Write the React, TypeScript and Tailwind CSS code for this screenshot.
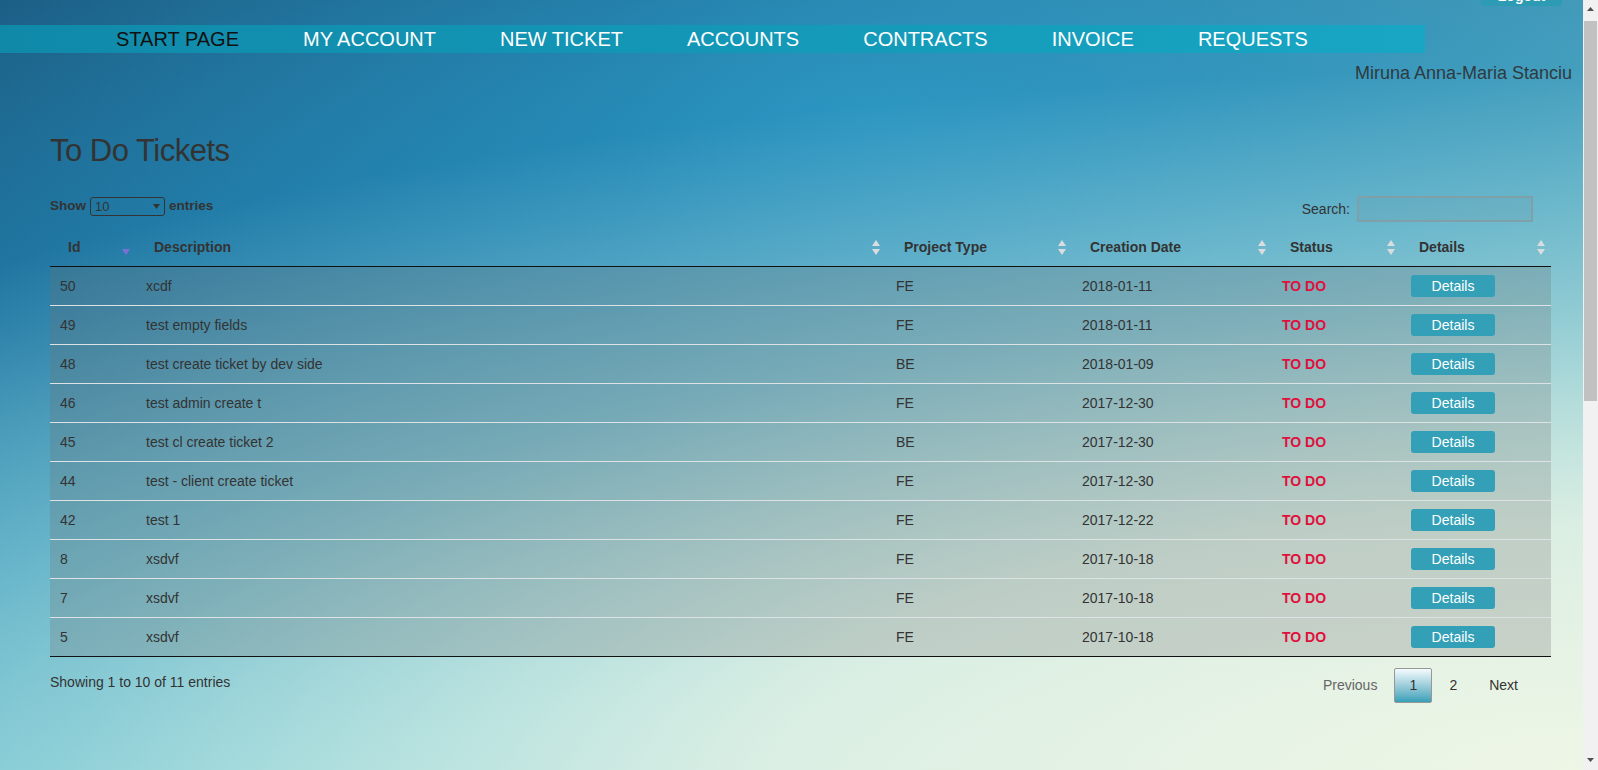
import React from "react";

const navItems = ["START PAGE", "MY ACCOUNT", "NEW TICKET", "ACCOUNTS", "CONTRACTS", "INVOICE", "REQUESTS"];

const tickets = [
  { id: 50, desc: "xcdf", type: "FE", date: "2018-01-11" },
  { id: 49, desc: "test empty fields", type: "FE", date: "2018-01-11" },
  { id: 48, desc: "test create ticket by dev side", type: "BE", date: "2018-01-09" },
  { id: 46, desc: "test admin create t", type: "FE", date: "2017-12-30" },
  { id: 45, desc: "test cl create ticket 2", type: "BE", date: "2017-12-30" },
  { id: 44, desc: "test - client create ticket", type: "FE", date: "2017-12-30" },
  { id: 42, desc: "test 1", type: "FE", date: "2017-12-22" },
  { id: 8, desc: "xsdvf", type: "FE", date: "2017-10-18" },
  { id: 7, desc: "xsdvf", type: "FE", date: "2017-10-18" },
  { id: 5, desc: "xsdvf", type: "FE", date: "2017-10-18" },
];

const columns = ["Id", "Description", "Project Type", "Creation Date", "Status", "Details"];

const SortIcon = ({ active }: { active?: boolean }) => (
  <svg width="8" height="15" viewBox="0 0 8 15" className="shrink-0">
    {active ? (
      <polygon points="0,9 8,9 4,15" fill="#7b70d8" />
    ) : (
      <>
        <polygon points="4,0 8,6 0,6" fill="#d9dde0" />
        <polygon points="0,9 8,9 4,15" fill="#d9dde0" />
      </>
    )}
  </svg>
);

const gridCols = "grid grid-cols-[86px_750px_186px_200px_129px_150px]";

export default function App() {
  return (
    <div className="h-[770px] flex overflow-hidden font-['Liberation_Sans',Arial,sans-serif] text-[#333]">
      <div className="flex-1 min-w-0 bg-[image:radial-gradient(ellipse_2300px_700px_at_100%_100%,rgba(238,246,230,1)_0%,rgba(238,246,230,0.85)_35%,rgba(238,246,230,0.4)_65%,rgba(238,246,230,0)_100%),radial-gradient(ellipse_1000px_420px_at_55%_15%,rgba(45,160,205,0.7)_0%,rgba(45,160,205,0)_100%),linear-gradient(to_right,rgba(120,190,200,0)_40%,rgba(120,190,200,0.45)_100%),linear-gradient(168deg,#1b5a80_0%,#1f7aa6_30%,#2d98bd_50%,#5cc0d3_75%,#90d4e0_100%)]">
        {/* logout */}
        <div className="h-[25px] flex justify-end items-start pr-[21px]">
          <button className="mt-[-22px] h-[28px] w-[81px] rounded-[3px] bg-[#2e9bb5] text-white text-[14px] font-bold flex items-end justify-center pb-[2px] leading-[16px]">
            Logout
          </button>
        </div>

        {/* nav */}
        <nav className="h-[28px] w-[1425px] bg-gradient-to-r from-[#1089a9] to-[#18a6c4] flex pl-[84px]">
          {navItems.map((item, i) => (
            <a
              key={item}
              className={`px-8 text-[20px] leading-[28px] ${i === 0 ? "text-[#111]" : "text-white"}`}
            >
              {item}
            </a>
          ))}
        </nav>

        <div className="mt-[10px] pr-[11px] text-right text-[18px] leading-[20px] text-[#2f3a40]">
          Miruna Anna-Maria Stanciu
        </div>

        <div className="pl-[50px] w-[1551px]">
          <h2 className="mt-[52px] text-[31px] leading-[31px] tracking-[-0.5px] text-[#333]">To Do Tickets</h2>

          {/* controls */}
          <div className="mt-[30px] h-[26px] flex justify-between items-start pr-[18px]">
            <div className="mt-[1px] h-[19px] flex items-center gap-[4px] text-[13.5px]">
              <span className="font-bold">Show</span>
              <div className="w-[75px] h-[19px] border border-[#333] rounded-[3px] flex items-center justify-between px-[4px] text-[13px]">
                <span>10</span>
                <svg width="7" height="5" viewBox="0 0 7 5">
                  <polygon points="0,0 7,0 3.5,5" fill="#333" />
                </svg>
              </div>
              <span className="font-bold">entries</span>
            </div>
            <div className="flex items-center gap-[7px] h-[26px]">
              <span className="text-[14px]">Search:</span>
              <div className="w-[176px] h-[26px] border-2 border-[#7f9fa9] bg-[rgba(110,140,150,0.12)]" />
            </div>
          </div>

          {/* table */}
          <div className="mt-[7px] w-[1501px]">
            <div className={`${gridCols} h-[38px] border-b border-[#111]`}>
              {columns.map((c, i) => (
                <div key={c} className="flex items-center justify-between pl-[18px] pr-[6px]">
                  <span className="text-[14px] font-bold">{c}</span>
                  <SortIcon active={i === 0} />
                </div>
              ))}
            </div>
            {tickets.map((t, i) => (
              <div
                key={t.id}
                className={`${gridCols} h-[39px] bg-[rgba(110,110,110,0.25)] border-b ${
                  i === tickets.length - 1 ? "border-[#111]" : "border-[#dde3e5]"
                } text-[14px]`}
              >
                <div className="flex items-center pl-[10px]">{t.id}</div>
                <div className="flex items-center pl-[10px]">{t.desc}</div>
                <div className="flex items-center pl-[10px]">{t.type}</div>
                <div className="flex items-center pl-[10px]">{t.date}</div>
                <div className="flex items-center pl-[10px] font-bold text-[#e0103c]">TO DO</div>
                <div className="flex items-center pl-[10px]">
                  <button className="w-[84px] h-[22px] rounded-[3px] bg-[#33a0b8] text-white text-[14px] leading-[22px]">
                    Details
                  </button>
                </div>
              </div>
            ))}
          </div>

          {/* footer */}
          <div className="mt-[11px] flex justify-between items-start pr-[18px] text-[14px]">
            <div className="mt-[6px] leading-[17px]">Showing 1 to 10 of 11 entries</div>
            <div className="flex items-center gap-[2px]">
              <span className="px-[14px] h-[35px] leading-[33px] border border-transparent text-[#666]">Previous</span>
              <span className="w-[38px] h-[35px] leading-[33px] text-center border border-[#979797] rounded-[2px] bg-gradient-to-b from-[#f4fbfd] to-[#34a0b8] text-[#333]">
                1
              </span>
              <span className="px-[14px] h-[35px] leading-[33px] border border-transparent">2</span>
              <span className="px-[14px] h-[35px] leading-[33px] border border-transparent">Next</span>
            </div>
          </div>
        </div>
      </div>

      {/* scrollbar */}
      <div className="w-[15px] shrink-0 bg-[#f1f1f1] flex flex-col items-center">
        <svg width="7" height="4" viewBox="0 0 7 4" className="mt-[7px]">
          <polygon points="3.5,0 7,4 0,4" fill="#505050" />
        </svg>
        <div className="mt-[10px] w-[13px] h-[380px] bg-[#c1c1c1]" />
        <div className="flex-1" />
        <svg width="7" height="4" viewBox="0 0 7 4" className="mb-[8px]">
          <polygon points="0,0 7,0 3.5,4" fill="#505050" />
        </svg>
      </div>
    </div>
  );
}
